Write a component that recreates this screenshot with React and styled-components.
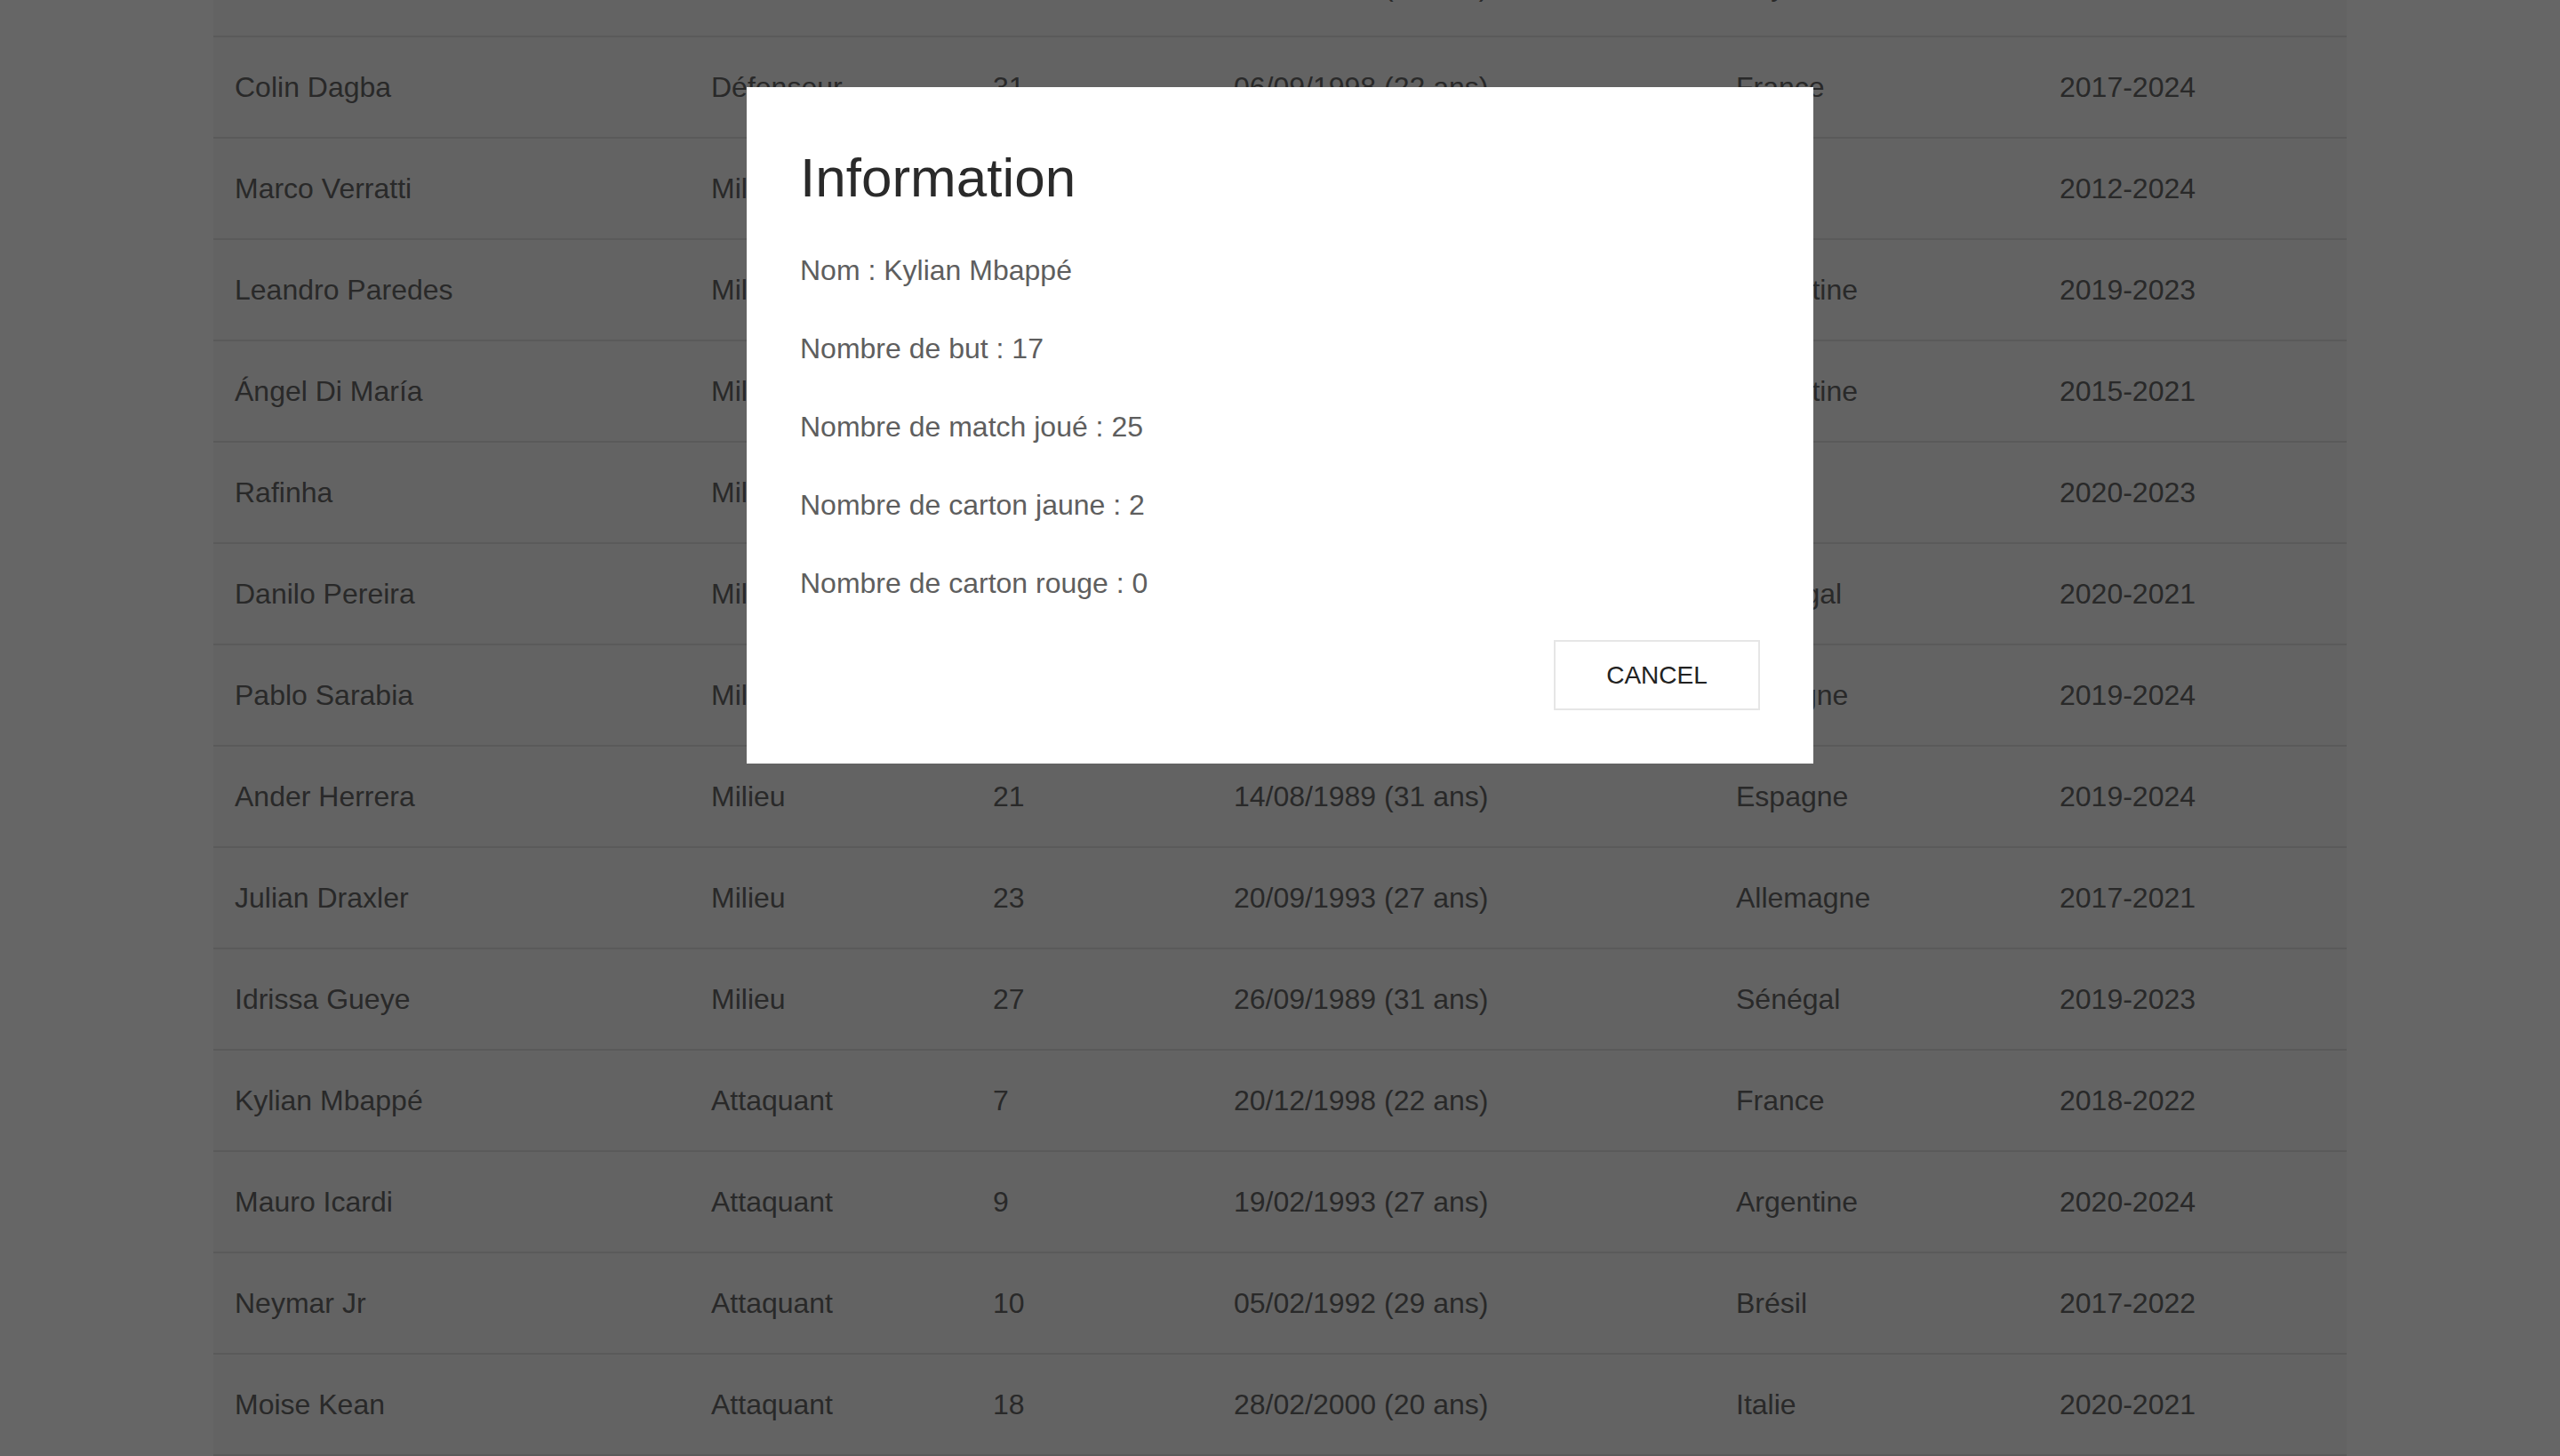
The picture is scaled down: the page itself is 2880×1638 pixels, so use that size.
import React from 'react';
import styled, { createGlobalStyle } from 'styled-components';

const players = [
    { name: 'Mitchel Bakker', pos: 'Défenseur', num: 25, birth: '20/06/2000 (20 ans)', country: 'Pays-Bas', years: '2019-2021' },
    { name: 'Colin Dagba', pos: 'Défenseur', num: 31, birth: '06/09/1998 (22 ans)', country: 'France', years: '2017-2024' },
    { name: 'Marco Verratti', pos: 'Milieu', num: 6, birth: '05/11/1992 (28 ans)', country: 'Italie', years: '2012-2024' },
    { name: 'Leandro Paredes', pos: 'Milieu', num: 8, birth: '29/06/1994 (26 ans)', country: 'Argentine', years: '2019-2023' },
    { name: 'Ángel Di María', pos: 'Milieu', num: 11, birth: '14/02/1988 (33 ans)', country: 'Argentine', years: '2015-2021' },
    { name: 'Rafinha', pos: 'Milieu', num: 12, birth: '12/02/1993 (28 ans)', country: 'Brésil', years: '2020-2023' },
    { name: 'Danilo Pereira', pos: 'Milieu', num: 15, birth: '09/09/1991 (29 ans)', country: 'Portugal', years: '2020-2021' },
    { name: 'Pablo Sarabia', pos: 'Milieu', num: 19, birth: '11/05/1992 (28 ans)', country: 'Espagne', years: '2019-2024' },
    { name: 'Ander Herrera', pos: 'Milieu', num: 21, birth: '14/08/1989 (31 ans)', country: 'Espagne', years: '2019-2024' },
    { name: 'Julian Draxler', pos: 'Milieu', num: 23, birth: '20/09/1993 (27 ans)', country: 'Allemagne', years: '2017-2021' },
    { name: 'Idrissa Gueye', pos: 'Milieu', num: 27, birth: '26/09/1989 (31 ans)', country: 'Sénégal', years: '2019-2023' },
    { name: 'Kylian Mbappé', pos: 'Attaquant', num: 7, birth: '20/12/1998 (22 ans)', country: 'France', years: '2018-2022' },
    { name: 'Mauro Icardi', pos: 'Attaquant', num: 9, birth: '19/02/1993 (27 ans)', country: 'Argentine', years: '2020-2024' },
    { name: 'Neymar Jr', pos: 'Attaquant', num: 10, birth: '05/02/1992 (29 ans)', country: 'Brésil', years: '2017-2022' },
    { name: 'Moise Kean', pos: 'Attaquant', num: 18, birth: '28/02/2000 (20 ans)', country: 'Italie', years: '2020-2021' },
];

const stats = [
    'Nom : Kylian Mbappé',
    'Nombre de but : 17',
    'Nombre de match joué : 25',
    'Nombre de carton jaune : 2',
    'Nombre de carton rouge : 0',
];

const App = () => {
    return (
        <>
            <GlobalStyle />
            <StyledPage>
                <StyledTable>
                    {players.map((p) => (
                        <StyledRow key={p.name}>
                            <StyledCell>{p.name}</StyledCell>
                            <StyledCell>{p.pos}</StyledCell>
                            <StyledCell>{p.num}</StyledCell>
                            <StyledCell>{p.birth}</StyledCell>
                            <StyledCell>{p.country}</StyledCell>
                            <StyledCell>{p.years}</StyledCell>
                        </StyledRow>
                    ))}
                </StyledTable>
            </StyledPage>
            <StyledBackdrop>
                <StyledDialog>
                    <StyledTitle>Information</StyledTitle>
                    <StyledContent>
                        {stats.map((s) => (
                            <StyledText key={s}>{s}</StyledText>
                        ))}
                    </StyledContent>
                    <StyledActions>
                        <StyledButton>CANCEL</StyledButton>
                    </StyledActions>
                </StyledDialog>
            </StyledBackdrop>
        </>
    )
}

export default App;

const GlobalStyle = createGlobalStyle`
    html, body {
        margin: 0;
        padding: 0;
        background: #ffffff;
        font-family: 'Liberation Sans', Arial, sans-serif;
    }
    * {
        box-sizing: border-box;
    }
`;
const StyledPage = styled.div`
    width: 100%;
    height: 100vh;
    overflow: hidden;
    background: #ffffff;
`;
// page is scrolled: first row only shows its bottom
const StyledTable = styled.div`
    width: 2400px;
    margin: -72px auto 0;
    background: #f8f8f8;
`;
const StyledRow = styled.div`
    display: grid;
    grid-template-columns: 536px 317px 271px 565px 364px 347px;
    height: 114px;
    align-items: center;
    border-bottom: 2px solid #e2e2e2;
`;
const StyledCell = styled.div`
    padding-left: 24px;
    font-size: 32px;
    color: #666666;
    white-space: nowrap;
`;
const StyledBackdrop = styled.div`
    position: fixed;
    inset: 0;
    background: rgba(0, 0, 0, 0.6);
    display: flex;
    justify-content: center;
    align-items: flex-start;
    padding-top: 98px;
`;
const StyledDialog = styled.div`
    width: 1200px;
    background: #ffffff;
    padding: 60px;
    display: flex;
    flex-direction: column;
`;
const StyledTitle = styled.h2`
    margin: 0 0 38px;
    font-size: 62px;
    line-height: 84px;
    font-weight: 400;
    color: #2a2a2a;
`;
const StyledContent = styled.div`
    display: flex;
    flex-direction: column;
    gap: 40px;
`;
const StyledText = styled.p`
    margin: 0;
    font-size: 32px;
    line-height: 48px;
    color: #5e5e5e;
`;
const StyledActions = styled.div`
    display: flex;
    justify-content: flex-end;
    margin-top: 40px;
`;
const StyledButton = styled.button`
    width: 232px;
    height: 79px;
    background: #ffffff;
    border: 2px solid #e6e6e6;
    border-radius: 0;
    font-family: 'Liberation Sans', Arial, sans-serif;
    font-size: 28px;
    color: #222222;
    cursor: pointer;
`;
